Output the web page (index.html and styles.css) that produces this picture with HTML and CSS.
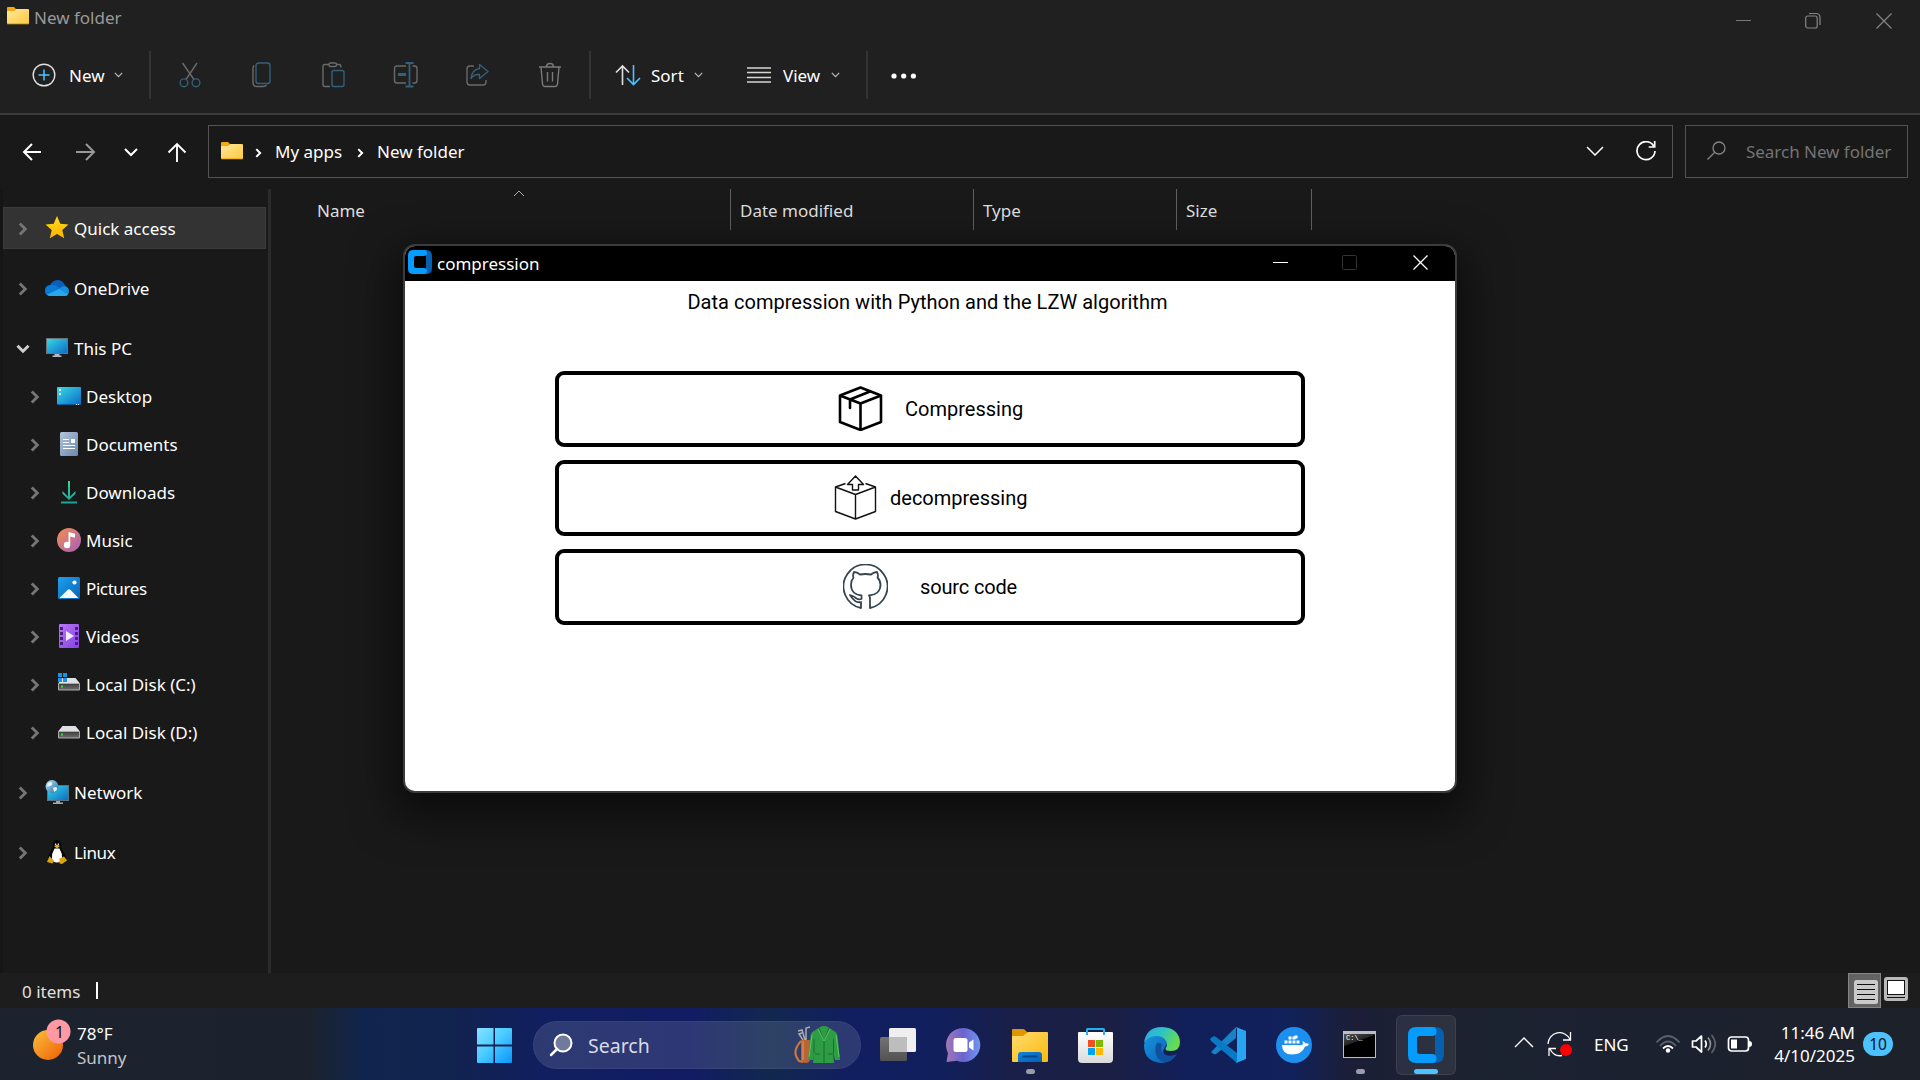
FILE: index.html
```
<!DOCTYPE html>
<html lang="en">
<head>
<meta charset="utf-8">
<title>New folder</title>
<link rel="stylesheet" href="styles.css">
</head>
<body>
<svg class="defs" width="0" height="0" aria-hidden="true">
  <defs>
    <linearGradient id="gFolder" x1="0" y1="0" x2="1" y2="1"><stop offset="0" stop-color="#ffe79c"/><stop offset="1" stop-color="#ffca3e"/></linearGradient>
    <linearGradient id="gStar" x1="0" y1="0" x2="0" y2="1"><stop offset="0" stop-color="#ffdc1a"/><stop offset="1" stop-color="#ffb300"/></linearGradient>
    <linearGradient id="gScreen" x1="0" y1="0" x2="1" y2="1"><stop offset="0" stop-color="#37dbe8"/><stop offset="1" stop-color="#0b69c4"/></linearGradient>
    <linearGradient id="gDoc" x1="0" y1="0" x2="1" y2="1"><stop offset="0" stop-color="#b3c5da"/><stop offset="1" stop-color="#6a89ac"/></linearGradient>
    <linearGradient id="gDown" x1="0" y1="0" x2="0" y2="1"><stop offset="0" stop-color="#3bd59b"/><stop offset="1" stop-color="#17a398"/></linearGradient>
    <linearGradient id="gMusic" x1="0" y1="0" x2="1" y2="1"><stop offset="0" stop-color="#f78f4c"/><stop offset="1" stop-color="#a45cc0"/></linearGradient>
    <linearGradient id="gPic" x1="0" y1="0" x2="1" y2="1"><stop offset="0" stop-color="#1fa1ec"/><stop offset="1" stop-color="#0763ba"/></linearGradient>
    <linearGradient id="gVid" x1="0" y1="0" x2="1" y2="1"><stop offset="0" stop-color="#b877f6"/><stop offset="1" stop-color="#8642e2"/></linearGradient>
    <linearGradient id="gSun" x1="0" y1="0" x2="1" y2="1"><stop offset="0" stop-color="#f8c13c"/><stop offset="1" stop-color="#f05d06"/></linearGradient>
    <linearGradient id="gWin" x1="0" y1="0" x2="1" y2="1"><stop offset="0" stop-color="#86e2ff"/><stop offset=".45" stop-color="#4ccdff"/><stop offset="1" stop-color="#0a96fb"/></linearGradient>
    <linearGradient id="gTask" x1="0" y1="0" x2="0" y2="1"><stop offset="0" stop-color="#727272"/><stop offset="1" stop-color="#525252"/></linearGradient>
    <linearGradient id="gChat" x1="0" y1="0" x2="1" y2="0"><stop offset="0" stop-color="#a477b4"/><stop offset=".5" stop-color="#6a64cd"/><stop offset="1" stop-color="#7196f0"/></linearGradient>
    <linearGradient id="gFile" x1="0" y1="0" x2="1" y2="1"><stop offset="0" stop-color="#ffdc70"/><stop offset="1" stop-color="#fbb90d"/></linearGradient>
    <linearGradient id="gDock" x1="0" y1="0" x2="1" y2="1"><stop offset="0" stop-color="#1382da"/><stop offset="1" stop-color="#0460b4"/></linearGradient>
    <linearGradient id="gStore" x1="0" y1="0" x2="0" y2="1"><stop offset="0" stop-color="#fff"/><stop offset="1" stop-color="#dadada"/></linearGradient>
    <linearGradient id="gEdgeTop" x1="0" y1="0" x2="1" y2=".4"><stop offset="0" stop-color="#2ca8dc"/><stop offset=".5" stop-color="#2fc2c8"/><stop offset="1" stop-color="#65dc50"/></linearGradient>
    <linearGradient id="gEdgeBody" x1="0" y1="0" x2="1" y2="1"><stop offset="0" stop-color="#1794dc"/><stop offset="1" stop-color="#0a62b8"/></linearGradient>
    <linearGradient id="gDisk" x1="0" y1="0" x2="0" y2="1"><stop offset="0" stop-color="#3c3c3c"/><stop offset="1" stop-color="#6f6f6f"/></linearGradient>
    <linearGradient id="gGlobe" x1="0" y1="0" x2="1" y2="1"><stop offset="0" stop-color="#bfe3f5"/><stop offset="1" stop-color="#1b6ea8"/></linearGradient>
    <symbol id="folder" viewBox="0 0 22 18"><path d="M0 1q0-1 1-1h6l2 2-2 3H0z" fill="#f3a90e"/><path d="M0 4h7l2-2h12q1 0 1 1v13q0 1-1 1H1q-1 0-1-1z" fill="url(#gFolder)"/><path d="M.3 16.8h21.4" stroke="#e8a317"/></symbol>
    <symbol id="chev" viewBox="0 0 10 14"><path d="M1.800 1.500 7.300 7l-5.500 5.500" fill="none" stroke="currentColor" stroke-width="2.900"/></symbol>
    <symbol id="caret" viewBox="0 0 9 6"><path d="M.8.8 4.500 4.600 8.200.8" fill="none" stroke="#bbb" stroke-width="1.200"/></symbol>
    <symbol id="disk" viewBox="0 0 22 13"><path d="M4.500 0h13L22 5.500H0z" fill="#dfe0e4"/><path d="M.5 5.500h21v6.500H.5z" fill="url(#gDisk)" stroke="#aaa"/><path d="M3 7.500h2v2H3z" fill="#2fe63a"/></symbol>
    <symbol id="ring" viewBox="0 0 36 36"><path d="M22 0h5q9 0 9 9v18q0 9-9 9h-5l5-8V8z" fill="#0561b0"/><path d="M8 0h16q4.500 0 4.500 4.500T24 9H12q-3 0-3 3v12q0 3 3 3h12q4.500 0 4.500 4.500T24 36H8q-8 0-8-8V8q0-8 8-8z" fill="#069bff"/></symbol>
  </defs>
</svg>

<div class="explorer">
  <header class="titlebar">
    <div class="title"><svg class="title-folder" width="22" height="18"><use href="#folder"/></svg><span>New folder</span></div>
    <div class="win-controls">
      <svg width="16" height="18" viewBox="0 0 16 18"><path d="M1 8.500h15" stroke="#777"/></svg>
      <svg width="16" height="18" viewBox="0 0 16 18" fill="none" stroke="#858585" stroke-width="1.200"><rect x=".7" y="4" width="11.500" height="12" rx="2"/><path d="M4 1.500h7q4 0 4 4V13"/></svg>
      <svg width="16" height="18" viewBox="0 0 16 18"><path d="m.5 1.500 15 15m0-15-15 15" stroke="#858585" stroke-width="1.200"/></svg>
    </div>
  </header>

  <div class="toolbar">
    <div class="tool tool-new">
      <svg width="24" height="24" viewBox="0 0 24 24" fill="none"><circle cx="12" cy="12" r="10.800" stroke="#dedede" stroke-width="1.400"/><path d="M12 6.500v11M6.500 12h11" stroke="#4cc2ff" stroke-width="1.500"/></svg>
      <span class="tool-label">New</span><svg width="9" height="6"><use href="#caret"/></svg>
    </div>
    <i class="sep"></i>
    <div class="tool-icons">
      <svg width="26" height="26" viewBox="0 0 26 26" fill="none" stroke-width="1.400"><path d="M5.500 1 17 17.500M20 1 9 17.500" stroke="#6a6a6a"/><circle cx="7" cy="20.800" r="3.900" stroke="#31617c"/><circle cx="19" cy="20.800" r="3.900" stroke="#31617c"/></svg>
      <svg width="26" height="26" viewBox="0 0 26 26" fill="none" stroke-width="1.400"><path d="M5 3.500q-1 1-1 3v14q0 4 4 4h6q2.500 0 3.500-1.500" stroke="#6a6a6a"/><rect x="7" y="1" width="14" height="20.500" rx="2.500" stroke="#31617c"/></svg>
      <svg width="26" height="26" viewBox="0 0 26 26" fill="none" stroke-width="1.400" stroke="#6a6a6a"><path d="M8 2.500H4q-2 0-2 2v18q0 2 2 2h5M15 2.500h3q2 0 2 3"/><rect x="8" y="1" width="7.500" height="3.500" rx="1.500"/><rect x="11" y="8.500" width="12" height="16" rx="2" stroke="#31617c"/></svg>
      <svg width="26" height="26" viewBox="0 0 26 26" fill="none" stroke-width="1.400" stroke="#6a6a6a"><path d="M13 4H4Q1.500 4 1.500 6.500v12Q1.500 21 4 21h9M19.500 4h2Q24 4 24 6.500v12Q24 21 21.500 21h-2"/><path d="M12.500 1h8M12.500 24.500h8M16.500 1v23.500" stroke="#31617c" stroke-width="1.800"/><path d="M5 12.500h8" stroke="#31617c" stroke-width="3"/></svg>
      <svg width="26" height="26" viewBox="0 0 26 26" fill="none" stroke-width="1.400" stroke="#6a6a6a"><path d="M9 4H5Q2 4 2 7v13q0 3 3 3h13q3 0 3-3v-2"/><path d="M14.500 2.500 23 9.500l-8.500 7V12.500Q9 12 6 16.500 6.500 8 14.500 6.500z" stroke="#31617c" stroke-linejoin="round"/></svg>
      <svg width="26" height="26" viewBox="0 0 26 26" fill="none" stroke-width="1.400" stroke="#7a7a7a"><path d="M2 5h22M4 5l1.500 17q.3 2.500 2.500 2.500h10q2.200 0 2.500-2.500L22 5M9.500 5q0-3.500 3.500-3.500T16.500 5M10.500 10v9.500M15.500 10v9.500"/></svg>
    </div>
    <i class="sep"></i>
    <div class="tool tool-sort">
      <svg width="26" height="22" viewBox="0 0 26 22" fill="none" stroke-width="1.600"><path d="M7.500 21V2M1 8.500 7.500 2l6.500 6.500" stroke="#e0e0e0"/><path d="M18.500 1v19.500M12 14l6.500 6.500L25 14" stroke="#4cc2ff"/></svg>
      <span class="tool-label">Sort</span><svg width="9" height="6"><use href="#caret"/></svg>
    </div>
    <div class="tool tool-view">
      <svg width="24" height="18" viewBox="0 0 24 18"><path d="M0 2h24M0 6.500h24M0 11.500h24M0 16h24" stroke="#d5d5d5" stroke-width="1.400"/></svg>
      <span class="tool-label">View</span><svg width="9" height="6"><use href="#caret"/></svg>
    </div>
    <i class="sep"></i>
    <svg class="dots" width="26" height="6" viewBox="0 0 26 6" fill="#fff"><circle cx="3" cy="3" r="2.600"/><circle cx="12.700" cy="3" r="2.600"/><circle cx="22.400" cy="3" r="2.600"/></svg>
  </div>

  <nav class="navrow">
    <div class="nav-buttons">
      <svg width="20" height="20" viewBox="0 0 20 20" fill="none" stroke="#fff" stroke-width="2"><path d="M19 10H2M10 2 2 10l8 8"/></svg>
      <svg width="20" height="20" viewBox="0 0 20 20" fill="none" stroke="#9a9a9a" stroke-width="2"><path d="M0 10h18M10 2l8 8-8 8"/></svg>
      <svg width="14" height="9" viewBox="0 0 14 9" fill="none" stroke="#fff" stroke-width="2"><path d="m1 1 6 6 6-6"/></svg>
      <svg width="20" height="20" viewBox="0 0 20 20" fill="none" stroke="#fff" stroke-width="1.900"><path d="M10 20V2M1.500 10.500 10 2l8.500 8.500"/></svg>
    </div>
    <div class="address">
      <svg class="addr-folder" width="22" height="18"><use href="#folder"/></svg>
      <svg class="crumb-chev" width="7" height="10"><use href="#chev"/></svg>
      <span class="crumb crumb-apps">My apps</span>
      <svg class="crumb-chev" width="7" height="10"><use href="#chev"/></svg>
      <span class="crumb">New folder</span>
      <div class="addr-actions">
        <svg width="18" height="10" viewBox="0 0 18 10" fill="none" stroke="#fff" stroke-width="1.500"><path d="m1 1 8 8 8-8"/></svg>
        <svg width="20" height="20" viewBox="0 0 20 20" fill="none" stroke="#fff" stroke-width="1.700"><path d="M18 5.500A9 9 0 1 0 19 10M18.700 0v6h-6"/></svg>
      </div>
    </div>
    <div class="searchbox">
      <svg width="19" height="19" viewBox="0 0 19 19" fill="none" stroke="#858585" stroke-width="1.300"><circle cx="12" cy="7" r="6"/><path d="m7.500 11.500-7 7"/></svg>
      <span>Search New folder</span>
    </div>
  </nav>

  <div class="content">
    <aside class="sidebar">
      <div class="row selected"><svg class="chev" width="10" height="14"><use href="#chev"/></svg><svg class="icon" width="24" height="24" viewBox="0 0 24 24"><path d="m12 0 3.300 7.800 8.200.700-6.200 5.400 1.900 8.400L12 17.900l-7.200 4.400 1.900-8.400L.5 8.500l8.200-.7z" fill="url(#gStar)"/></svg><span>Quick access</span></div>
      <div class="row group"><svg class="chev" width="10" height="14"><use href="#chev"/></svg><svg class="icon" width="24" height="24" viewBox="0 0 24 24"><path d="M5 9Q8 4 13 4t8 7v5H4z" fill="#0a5fb8"/><path d="M5 20q-5-.5-5-5.500T5 9q4-1 8 2l6 4-7 5z" fill="#0a78d4"/><path d="M13 14q4-5 8-3.500 3 1.500 3 4.700 0 4.800-5 4.800h-3z" fill="#1490df"/><path d="M2 18.500 14 13l9 5.500Q22 20 19 20H6q-3 0-4-1.500z" fill="#28a8ea"/></svg><span>OneDrive</span></div>
      <div class="row group"><svg class="chev open" width="14" height="10" viewBox="0 0 14 10"><path d="m1.500 1.800 5.500 5.500 5.500-5.500" fill="none" stroke="#d0d0d0" stroke-width="2.900"/></svg><svg class="icon" width="24" height="24" viewBox="0 0 24 24"><rect x="1.500" y="2.500" width="21" height="15" fill="url(#gScreen)" stroke="#69747d"/><path d="M9.500 18h5v1.500h2V21h-9v-1.500h2z" fill="#b2bac3"/></svg><span>This PC</span></div>
      <div class="row sub"><svg class="chev" width="10" height="14"><use href="#chev"/></svg><svg class="icon" width="24" height="24" viewBox="0 0 24 24"><rect y="3" width="24" height="18" rx="1" fill="url(#gScreen)"/><path d="M0 20h24v1H0z" fill="#075a9f"/><path d="M2 5h2v2H2zm0 4h2v2H2zM19 20h1v1h-1zm2 0h1v1h-1z" fill="#fff"/></svg><span>Desktop</span></div>
      <div class="row sub"><svg class="chev" width="10" height="14"><use href="#chev"/></svg><svg class="icon" width="24" height="24" viewBox="0 0 24 24"><rect x="3" width="18" height="24" rx="1.500" fill="url(#gDoc)"/><path d="M6 7.500h6M6 10.500h6M6 13.500h12M6 16.500h12" stroke="#fff" stroke-width="1.200"/><path d="M14 7h4v4h-4z" fill="#fff"/></svg><span>Documents</span></div>
      <div class="row sub"><svg class="chev" width="10" height="14"><use href="#chev"/></svg><svg class="icon" width="24" height="24" viewBox="0 0 24 24"><path d="M11 1h2v15.500l5.500-5.500v2.800L12 20l-6.500-6.200V11l5.500 5.500zM4 21.500h16v2H4z" fill="url(#gDown)"/></svg><span>Downloads</span></div>
      <div class="row sub"><svg class="chev" width="10" height="14"><use href="#chev"/></svg><svg class="icon" width="24" height="24" viewBox="0 0 24 24"><circle cx="12" cy="12" r="12" fill="url(#gMusic)"/><circle cx="10" cy="17" r="3.200" fill="#fff"/><path d="M11.500 4 18 5.700v4L13.200 8.500V17h-1.700z" fill="#fff"/></svg><span>Music</span></div>
      <div class="row sub"><svg class="chev" width="10" height="14"><use href="#chev"/></svg><svg class="icon" width="24" height="24" viewBox="0 0 24 24"><rect x="1" y="1" width="22" height="22" rx="1.500" fill="url(#gPic)"/><path d="m2.500 22 8-8q1.500-1.300 3 0l8 8z" fill="#f4f9fe"/><circle cx="17.500" cy="6.500" r="2.100" fill="#fff"/></svg><span class="tight">Pictures</span></div>
      <div class="row sub"><svg class="chev" width="10" height="14"><use href="#chev"/></svg><svg class="icon" width="24" height="24" viewBox="0 0 24 24"><rect x="2" width="20" height="24" rx="1" fill="url(#gVid)"/><path d="M3 3h3v3H3zm0 5h3v3H3zm0 5h3v3H3zm0 5h3v3H3zM18 3h3v3h-3zm0 5h3v3h-3zm0 5h3v3h-3zm0 5h3v3h-3z" fill="#45207e"/><path d="m9 7 8 5-8 5z" fill="#f3ecfb"/></svg><span>Videos</span></div>
      <div class="row sub"><svg class="chev" width="10" height="14"><use href="#chev"/></svg><svg class="icon" width="24" height="24" viewBox="0 0 24 24"><use href="#disk" x="1" y="6" width="22" height="13"/><path d="M1 1h4v4H1zm5 0h4v4H6zM1 6h4v4H1zm5 0h4v4H6z" fill="#1795e4"/></svg><span>Local Disk (C:)</span></div>
      <div class="row sub"><svg class="chev" width="10" height="14"><use href="#chev"/></svg><svg class="icon" width="24" height="24" viewBox="0 0 24 24"><use href="#disk" x="1" y="6" width="22" height="13"/></svg><span>Local Disk (D:)</span></div>
      <div class="row group"><svg class="chev" width="10" height="14"><use href="#chev"/></svg><svg class="icon" width="24" height="24" viewBox="0 0 24 24"><rect x="2.500" y="5.500" width="21" height="15" fill="url(#gScreen)" stroke="#5b7280"/><path d="M11 21h4v1.500h3V24H8v-1.500h3z" fill="#a0a9b1"/><circle cx="7" cy="6.500" r="6.500" fill="url(#gGlobe)"/><path d="M3 3q3-2 4 0t-2 3-3 0zm5 5q3-2 4 0t-3 4z" fill="#e4f3fa"/></svg><span>Network</span></div>
      <div class="row group"><svg class="chev" width="10" height="14"><use href="#chev"/></svg><svg class="icon" width="24" height="24" viewBox="0 0 24 24"><path d="M8 5q0-5 4-5t4 5q0 3 2 6 3 4 3 8l-3 3H6l-3-3q0-4 3-8 2-3 2-6z" fill="#050505"/><path d="M9.500 8.500h5q3 5 2.500 10-1 4-5 4t-5-4q-.5-5 2.500-10z" fill="#fff"/><path d="m9 6 3-1.500L15 6l-3 2.500z" fill="#e9ad16"/><path d="M10 3.500h1.200V5H10zm2.800 0H14V5h-1.200z" fill="#ddd"/><path d="m4.500 16 4.500 5-1.500 2.500L2 22zM19 16.500l-4.500 2v5L17 24l5-3.500z" fill="#dca310"/></svg><span class="tight">Linux</span></div>
    </aside>
    <main class="files">
      <div class="columns">
        <div class="col col-name">Name<svg class="sort-mark" width="12" height="7" viewBox="0 0 12 7"><path d="m1 6 5-5 5 5" fill="none" stroke="#aaa"/></svg></div>
        <div class="col col-date">Date modified</div>
        <div class="col col-type">Type</div>
        <div class="col col-size">Size</div>
      </div>
    </main>
  </div>

  <footer class="statusbar">
    <span class="item-count">0 items</span><i class="text-caret"></i>
    <div class="view-modes">
      <div class="mode active"><svg width="24" height="24" viewBox="0 0 24 24"><rect width="24" height="24" rx="2.500" fill="#cacaca"/><path d="M3 4.500h18M3 9.500h18M3 14.500h18M3 19.500h18" stroke="#111"/></svg></div>
      <svg class="mode-large" width="24" height="24" viewBox="0 0 24 24"><rect width="24" height="24" rx="3" fill="#b9b9b9"/><rect x="3.500" y="3.500" width="17" height="14" fill="#fff" stroke="#111"/><path d="M3 20.500h18" stroke="#111"/></svg>
    </div>
  </footer>
</div>

<section class="app-window">
  <header class="app-titlebar">
    <svg width="24" height="24"><use href="#ring"/></svg><span>compression</span>
    <div class="app-controls">
      <svg width="15" height="15" viewBox="0 0 15 15"><path d="M0 7.500h15" stroke="#fff"/></svg>
      <svg width="15" height="15" viewBox="0 0 15 15"><rect x=".5" y=".5" width="14" height="14" rx="1" fill="none" stroke="#333"/></svg>
      <svg width="15" height="15" viewBox="0 0 15 15"><path d="m.5.500 14 14m0-14-14 14" stroke="#fff" stroke-width="1.300"/></svg>
    </div>
  </header>
  <div class="app-body">
    <h1>Data compression with Python and the LZW algorithm</h1>
    <button class="action compress"><svg width="45" height="45" viewBox="0 0 45 45" fill="none" stroke="#000" stroke-width="2.600" stroke-linejoin="round" stroke-linecap="round"><path d="M22.500 1.500 43 9.500v26.500l-20.500 8L2 36V9.500zM2 9.500l20.500 8 20.500-8M22.500 17.500V44M32 5.500l-20 8V22"/></svg><span>Compressing</span></button>
    <button class="action decompress"><svg width="45" height="45" viewBox="0 0 45 45" fill="none" stroke="#111" stroke-width="1.400" stroke-linejoin="round"><path d="m12.500 8.500-10 3.500v24.500l20 7.500 20-7.500V12l-10-3.500M2.500 12l20 7.500 20-7.500M22.500 19.500V44"/><path d="m22.500 1 8 8.500h-5V15h-6V9.500h-5z" fill="#fff"/></svg><span>decompressing</span></button>
    <button class="action source"><svg width="45" height="45" viewBox="0 0 45 45" fill="none" stroke="#37454f" stroke-width="1.800" stroke-linejoin="round"><path d="M18 44A22 22 0 1 1 27 44V34.500Q27 32.500 26 31.500C33 31 37.500 27 37.500 21c0-3-1-5.500-3-7.500Q35.500 11 34 8q-3 0-6 2.500-5.500-1-11 0Q14 8 11 8q-1.500 3-.5 5.500-2.500 3-2.500 7.500c0 6 4 10 10.500 10.500V35q-3 .8-5-.5Q11 32 7 31q4 6 7 7 2 .5 4 0z"/></svg><span>sourc code</span></button>
  </div>
</section>

<footer class="taskbar">
  <div class="weather">
    <svg width="42" height="42" viewBox="0 0 42 42"><circle cx="16" cy="26" r="15" fill="url(#gSun)"/><circle cx="26.500" cy="12.500" r="12" fill="#ff99a4"/></svg><b class="weather-badge">1</b>
    <div class="weather-text"><span>78°F</span><span class="cond">Sunny</span></div>
  </div>
  <div class="dock">
    <svg class="start" width="35" height="35" viewBox="0 0 35 35"><path d="M1 0h15.500v16.500H0V1q0-1 1-1zm17 0h16q1 0 1 1v15.500H18zM0 18.500h16.500V35H1q-1 0-1-1zm18 0h17V34q0 1-1 1H18z" fill="url(#gWin)"/></svg>
    <div class="task-search">
      <svg width="24" height="24" viewBox="0 0 24 24"><circle cx="14" cy="10" r="8.500" fill="#71799f" stroke="#fff" stroke-width="2"/><path d="m8 16-6 6" stroke="#fff" stroke-width="2.500" stroke-linecap="round"/></svg>
      <span>Search</span>
      <svg class="golf" width="46" height="38" viewBox="0 0 46 38"><path d="M11 14 8 4 4 5m8 9V2l4-1M9 14 5 8l3-1" stroke="#a9acb0" stroke-width="1.500" fill="none"/><path d="M7 14h9v20q-1 3-4 3t-5-2z" fill="#b96432"/><path d="M7 15q-10 11-2 20l4 1" fill="none" stroke="#cf7440" stroke-width="2"/><path d="M9 15v19" stroke="#d98850" stroke-width="1.500"/><path d="M26 1q4-2 8 0l6 4q3 1 3.500 5L46 34h-5l-2-8 1 11H19l1-11-1 8h-5l2.500-24Q17 6 20 5z" fill="#2e9b45"/><path d="m25 2 5 13 5-13M30 15v22M20 13v14M39.500 13v14M21 28h5m8 0h5" stroke="#176e2d" fill="none"/><path d="m18 9-3 22m27-22 3 22M24 3l6 12 6-12" stroke="#59c762" fill="none"/></svg>
    </div>
    <div class="app"><svg width="36" height="36" viewBox="0 0 36 36"><rect y="10" width="27" height="24" rx="1.500" fill="url(#gTask)"/><rect x="9" y="1" width="27" height="24" rx="1.500" fill="#efefef"/><path d="M9 10h18v15H9z" fill="#bdbdbd"/></svg></div>
    <div class="app"><svg width="36" height="36" viewBox="0 0 36 36"><path d="M17.500 1a17 17 0 1 1-6.500 32.800L.5 35l1.500-9A17 17 0 0 1 17.500 1z" fill="url(#gChat)"/><rect x="7.500" y="11" width="14" height="14" rx="2.500" fill="#fff"/><path d="m23 15.500 4.500-3v11l-4.500-3z" fill="#fff"/></svg></div>
    <div class="app"><svg width="36" height="36" viewBox="0 0 36 36"><path d="M0 3q0-1 1-1h10q1 0 2 1l3 3-4 5H0z" fill="#de9702"/><path d="M0 9h11l5-4h19q1 0 1 1v28q0 1-1 1H1q-1 0-1-1z" fill="url(#gFile)"/><path d="M6 35v-7q0-3 3-3h18q3 0 3 3v7z" fill="url(#gDock)"/><path d="M10.500 29.500h15" stroke="#07478b" stroke-width="2"/></svg><i class="dot"></i></div>
    <div class="app"><svg width="36" height="36" viewBox="0 0 36 36"><path d="M0 6q0-1 1-1h33q1 0 1 1v26q0 4-4 4H4q-4 0-4-4z" fill="url(#gStore)"/><path d="M9 8V2.500Q9 2 9.500 2h16q.5 0 .5.500V8" fill="none" stroke="#23b1ee" stroke-width="2"/><path d="M10 13h7v7h-7z" fill="#f25022"/><path d="M18 13h7v7h-7z" fill="#7fba00"/><path d="M10 21h7v7h-7z" fill="#00a4ef"/><path d="M18 21h7v7h-7z" fill="#ffb900"/></svg></div>
    <div class="app"><svg width="36" height="36" viewBox="0 0 36 36"><path d="M0 18Q2 8 11 8q10 0 12 8l-4 8 3 11q-2 1-4 1Q0 35 0 18z" fill="url(#gEdgeBody)"/><path d="M12 18q-3 15 10 17.500Q29 34 33 27q-6 3-11 1-7-3-4-11-5-3-6 1z" fill="#124f9c"/><path d="M0 16Q2 0 18 0q17 1 18 15 0 9-9 9-6 0-5.500-2.500Q24 18 22 14 19 8.500 11 9 4 9.500 0 16z" fill="url(#gEdgeTop)"/></svg></div>
    <div class="app"><svg width="36" height="36" viewBox="0 0 36 36"><path d="M1 25 26 0v11L6 27q-2 1-5-2z" fill="#1682c8"/><path d="M0 12q3-4 6-2l21 16v10L1 14z" fill="#0879c4"/><path d="m26 0 10 4v28l-10 4q1-1 1-3V3q0-2-1-3z" fill="#28a5f2"/></svg></div>
    <div class="app"><svg width="36" height="36" viewBox="0 0 36 36"><circle cx="18" cy="18" r="18" fill="#1d8fee"/><path d="M6 18h20q1.500-1 .5-4 2 .5 3 2.500 2-.5 3.500.5-1 2.500-4 2.500-3 8-13 8Q6 27.500 6 18z" fill="#fff"/><path d="M8.500 13.500h3v3h-3zm4 0h3v3h-3zm4 0h3v3h-3zm4 0h3v3h-3zm-8-4h3v3h-3zm4 0h3v3h-3zm2-1h3v3h-3z" fill="#fff"/></svg></div>
    <div class="app cmd"><div class="cmd-icon"><span>C:\_</span></div><i class="dot"></i></div>
    <div class="app current"><svg width="36" height="36"><use href="#ring"/></svg><i class="dot wide"></i></div>
  </div>
  <div class="tray">
    <svg class="tray-up" width="20" height="12" viewBox="0 0 20 12"><path d="m1 11 9-9 9 9" fill="none" stroke="#fff" stroke-width="1.400"/></svg>
    <svg class="sync" width="26" height="26" viewBox="0 0 26 26" fill="none" stroke="#fff" stroke-width="1.300"><path d="M1 13A11.500 11.500 0 0 1 23 8.500M23.500 1v8H16M15 24.500Q7 26 3 18M2 25v-7.500h7"/><circle cx="19" cy="19" r="6" fill="#f00" stroke="none"/></svg>
    <span class="lang">ENG</span>
    <svg class="wifi" width="26" height="20" viewBox="0 0 26 20" fill="none" stroke-width="1.800"><path d="M1.500 8.500q11.500-13 23 0M5 12q8-9 16 0" stroke="#59616a"/><path d="M8 14.500q5-5 10 0" stroke="#fff"/><circle cx="13" cy="16.500" r="2.200" fill="#fff"/></svg>
    <svg class="sound" width="26" height="22" viewBox="0 0 26 22" fill="none" stroke="#fff" stroke-width="1.700"><path d="M1.500 8v6H5l5.500 5V3L5 8zM14 7.500q2.500 3.500 0 7" stroke-linejoin="round"/><path d="M17 4.500q5 6.500 0 13" stroke="#8b9097"/><path d="M20.500 2q7.500 9 0 18" stroke="#59616a"/></svg>
    <svg class="battery" width="26" height="18" viewBox="0 0 26 18"><rect x="1.500" y="2" width="20" height="14" rx="3" fill="none" stroke="#fff" stroke-width="1.700"/><path d="M4 4.500h6v9H4z" fill="#fff"/><path d="M22 6q3 0 3 3t-3 3z" fill="#fff"/></svg>
    <div class="clock"><span>11:46 AM</span><span>4/10/2025</span></div>
    <b class="notif">10</b>
  </div>
</footer>
</body>
</html>
```
FILE: styles.css
```
* { box-sizing: border-box; }
html, body { margin: 0; width: 1920px; height: 1080px; overflow: hidden; }
body {
  display: flex;
  flex-direction: column;
  position: relative;
  background: #191919;
  color: #fff;
  font: 17px/24px "Noto Sans", "Open Sans", sans-serif;
  white-space: nowrap;
}
svg { display: block; flex: none; }
.defs { position: absolute; }
i { display: block; flex: none; }

.explorer { display: flex; flex-direction: column; height: 1008px; flex: none; }
.titlebar { height: 50px; background: #202020; display: flex; justify-content: space-between; }
.title { display: flex; padding-left: 7px; color: #999; }
.title span { padding: 6px 0 0 5px; }
.title-folder { margin-top: 7px; }
.win-controls { display: flex; gap: 54px; padding: 12px 28px 0 0; }
.win-controls svg:last-child { margin-left: 1px; }

.toolbar { height: 65px; background: #202020; border-bottom: 2px solid #3b3b3b; display: flex; align-items: flex-start; padding: 1px 0 0 32px; }
.tool { display: flex; align-items: center; height: 48px; }
.tool-label { padding-top: 1px; }
.tool-new { width: 117px; }
.tool-new svg:first-child { margin-bottom: 1px; }
.tool-new .tool-label { width: 45px; margin-left: 13px; }
.sep { width: 2px; height: 48px; background: #343434; }
.tool-icons { display: flex; gap: 46px; height: 48px; align-items: center; padding: 0 26px; width: 438px; }
.tool-sort { width: 132px; margin-left: 24px; }
.tool-sort .tool-label { width: 43px; margin-left: 10px; }
.tool-view { width: 119px; }
.tool-view .tool-label { width: 48px; margin-left: 12px; }
.dots { margin: 22px 0 0 23px; }

.navrow { height: 74px; display: flex; padding: 10px 12px 0 22px; }
.nav-buttons { display: flex; align-items: center; height: 54px; width: 186px; }
.nav-buttons svg:nth-child(2) { margin-left: 34px; }
.nav-buttons svg:nth-child(3) { margin-left: 28px; }
.nav-buttons svg:nth-child(4) { margin-left: 29px; }
.address { width: 1465px; height: 53px; border: 1px solid #535353; display: flex; align-items: center; padding-left: 12px; }
.addr-folder { margin-bottom: 2px; }
.crumb-chev { margin: 3px 0 0 12px; }
.crumb { margin-left: 13px; }
.crumb-apps { width: 69px; }
.crumb-apps + .crumb-chev { margin-left: 13px; }
.addr-actions { margin-left: auto; display: flex; align-items: center; gap: 32px; padding: 0 16px 2px 0; }
.searchbox { margin-left: 12px; width: 223px; height: 53px; border: 1px solid #535353; display: flex; align-items: center; padding-left: 21px; color: #747474; }
.searchbox svg { margin-bottom: 2px; }
.searchbox span { margin-left: 20px; padding-top: 1px; letter-spacing: -.03px; }

.content { display: flex; height: 784px; }
.sidebar { width: 271px; border-left: 3px solid #151515; border-right: 3px solid #2b2b2b; padding: 15px 2px 0 0; }
.row { display: flex; align-items: center; height: 48px; padding-left: 15px; }
.row .chev { color: #757575; }
.row .chev.open { margin: 0 -2px; }
.row .icon { margin: 0 5px 2px 17px; }
.row.sub { padding-left: 27px; }
.row.group { margin-top: 12px; }
.row.selected { height: 42px; margin: 3px 0 16px; background: #333; border: 1px solid #3a3a3a; padding: 2px 0 0 14px; }
.tight { letter-spacing: -.4px; }
.files { flex: 1; }
.columns { display: flex; height: 41px; }
.col { border-right: 1px solid #606060; padding: 10px 0 0 9px; color: #dedede; position: relative; }
.col-name { width: 460px; padding-left: 46px; }
.col-date { width: 243px; }
.col-type { width: 203px; }
.col-size { width: 135px; }
.sort-mark { position: absolute; left: 242px; top: 1px; }

.statusbar { height: 35px; background: #1d1d1d; display: flex; align-items: center; padding-left: 22px; color: #e0e0e0; }
.item-count { width: 74px; padding-top: 3px; }
.text-caret { width: 2px; height: 17px; background: #fff; }
.view-modes { margin-left: auto; display: flex; padding-right: 12px; }
.mode { width: 33px; height: 35px; }
.mode.active { background: #636363; border: 1px solid #858585; padding: 6px 0 0 5px; }
.mode-large { margin: 4px 0 0 3px; }

.app-window {
  position: absolute; left: 403px; top: 244px; width: 1054px; height: 549px;
  border: 2px solid #3c3c3c; border-radius: 12px; background: #fff; overflow: hidden;
  box-shadow: 0 16px 44px 8px rgba(0, 0, 0, .55);
}
.app-titlebar { height: 35px; background: #000; display: flex; align-items: center; padding-left: 3px; }
.app-titlebar svg { margin-bottom: 3px; }
.app-titlebar span { margin-left: 5px; }
.app-controls { display: flex; gap: 54px; margin-left: auto; padding-right: 27px; }
.app-controls svg:last-child { margin-left: 2px; }
.app-body { display: flex; flex-direction: column; align-items: center; color: #000; font-family: Roboto, sans-serif; }
h1 { margin: 9px 5px 59px 0; font-size: 20px; letter-spacing: .03px; line-height: 24px; height: 22px; font-weight: 400; }
.action {
  display: flex; align-items: center; width: 750px; height: 76px; margin: 0 0 13px;
  padding: 0; border: 4px solid #000; border-radius: 9px; background: #fff;
  font: 20px/24px Roboto, sans-serif; color: #000;
}
.action svg { margin-bottom: 1px; }
.action span { padding-bottom: 1px; }
.compress { padding-left: 279px; }
.compress span { margin-left: 22px; }
.decompress { padding-left: 274px; }
.decompress span { margin-left: 12px; }
.source { padding-left: 284px; }
.source span { margin-left: 32px; letter-spacing: -.15px; }

.taskbar {
  height: 72px; display: flex; align-items: flex-start; position: relative;
  background: linear-gradient(90deg, #1d232e 0, #1b222d 310px, #10254e 365px, #11234f 450px, #111f5f 540px, #111c63 690px, #11284f 770px, #111e60 850px, #111f5d 940px, #191f49 1010px, #1b1f43 1110px, #111f5b 1190px, #11215a 1290px, #1b1e37 1350px, #1c2330 1450px, #1b2130 1600px, #1d212a 1920px);
}
.weather { display: flex; width: 477px; padding-left: 32px; position: relative; }
.weather > svg { margin-top: 11px; }
.weather-badge { position: absolute; left: 47px; top: 12px; width: 25px; text-align: center; font-size: 16px; font-weight: 400; color: #111; }
.weather-text { display: flex; flex-direction: column; padding: 14px 0 0 3px; }
.cond { color: #c3c4c8; }
.dock { display: flex; }
.start { margin-top: 20px; }
.task-search { margin: 13px 4px 0 21px; width: 328px; height: 48px; border-radius: 24px; border: 1px solid rgba(255,255,255,.05); background: rgba(255,255,255,.12); display: flex; align-items: center; padding-left: 15px; }
.task-search span { margin-left: 15px; font-size: 19.5px; color: #d9dbe8; padding-top: 1px; }
.golf { margin: 0 20px 0 auto; }
.app { width: 60px; height: 60px; margin: 7px 3px 0; padding: 11px 0 0 11px; border: 1px solid transparent; border-radius: 6px; position: relative; }
.dot { position: absolute; left: 25px; bottom: 0; width: 9px; height: 5px; border-radius: 3px; background: #999caa; }
.dot.wide { left: 17px; width: 24px; background: #4cc2ff; }
.current { background: rgba(255,255,255,.07); border-color: rgba(255,255,255,.08); }
.cmd { padding: 15px 0 0 12px; }
.cmd-icon { width: 33px; height: 27px; border: 1px solid #b8bec4; border-top-width: 3px; background: linear-gradient(160deg, #555 0, #222 35%, #000 36%); display: flex; }
.cmd-icon span { font: 7px/9px "Liberation Mono", monospace; margin-left: 2px; }
.tray { display: flex; align-items: flex-start; margin-left: auto; padding-right: 27px; }
.tray-up { margin-top: 28px; }
.sync { margin: 23px 0 0 13px; }
.lang { margin: 25px 0 0 21px; width: 61px; }
.wifi { margin-top: 26px; }
.sound { margin: 25px 0 0 10px; }
.battery { margin: 27px 0 0 10px; }
.clock { display: flex; flex-direction: column; align-items: flex-end; width: 102px; padding-top: 13px; line-height: 23px; }
.notif { margin: 24px 0 0 8px; width: 30px; height: 24px; border-radius: 12px; background: #4cc2ff; color: #111; font-size: 15.5px; line-height: 24px; font-weight: 400; text-align: center; }
```
